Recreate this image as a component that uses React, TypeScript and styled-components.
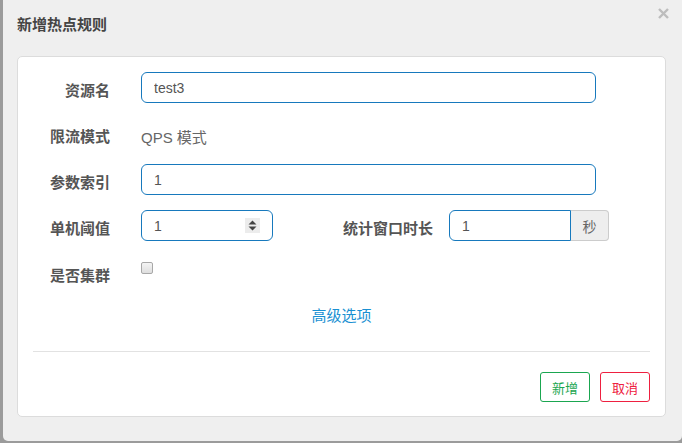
import styled, { createGlobalStyle } from 'styled-components';

const GlobalStyle = createGlobalStyle`
  html, body {
    margin: 0;
    padding: 0;
    background: #9b9b9b;
  }
  body {
    font-family: "Liberation Sans", "Noto Sans CJK SC", sans-serif;
  }
  * {
    box-sizing: border-box;
  }
`;

const Page = styled.div`
  display: flex;
  width: 682px;
  height: 443px;
  overflow: hidden;
`;

const Modal = styled.div`
  flex: 1;
  margin-left: 3px;
  height: 441px;
  background: #efefef;
  border-radius: 0 0 5px 5px;
  display: flex;
  flex-direction: column;
  padding: 0 16px 0 14px;
`;

const Header = styled.div`
  display: flex;
  justify-content: space-between;
  align-items: flex-start;
  height: 56px;
  padding-top: 15px;
`;

const Title = styled.h4`
  margin: 0;
  font-size: 15px;
  line-height: 20px;
  font-weight: bold;
  color: #444;
`;

const Close = styled.button`
  border: none;
  background: none;
  padding: 0;
  margin: -7px -3px 0 0;
  width: 11px;
  height: 11px;
  display: flex;
  cursor: pointer;
`;

const Panel = styled.div`
  background: #fff;
  border: 1px solid #dcdcdc;
  border-radius: 5px;
  height: 361px;
  display: flex;
  flex-direction: column;
  padding-top: 15px;
`;

const FormGroup = styled.div<{ $gap?: number }>`
  display: flex;
  align-items: flex-start;
  min-height: 31px;
  margin-bottom: ${(p) => (p.$gap ?? 15)}px;
`;

const Label = styled.label<{ $width?: number; $space?: number }>`
  width: ${(p) => p.$width ?? 92}px;
  margin-right: ${(p) => p.$space ?? 31}px;
  text-align: right;
  padding-top: 8px;
  line-height: 20px;
  font-size: 15px;
  font-weight: bold;
  color: #555;
  font-family: "Noto Sans CJK SC", sans-serif;
  flex: none;
`;

const inputBase = `
  height: 31px;
  border: 1px solid #1779bd;
  padding: 0 12px;
  font-size: 14px;
  color: #555;
  font-family: "Liberation Sans", "Noto Sans CJK SC", sans-serif;
  background: #fff;
  outline: none;
`;

const TextInput = styled.input<{ $width: number }>`
  ${inputBase}
  width: ${(p) => p.$width}px;
  border-radius: 6px;
`;

const StaticText = styled.p`
  margin: 0;
  padding-top: 10px;
  line-height: 20px;
  font-size: 15px;
  color: #666;
`;

const SpinBox = styled.div`
  ${inputBase}
  width: 132px;
  border-radius: 6px;
  display: flex;
  align-items: center;
`;

const BareInput = styled.input`
  flex: 1;
  min-width: 0;
  border: none;
  outline: none;
  padding: 0;
  font: inherit;
  color: inherit;
  background: transparent;
`;

const SpinButtons = styled.span`
  width: 15px;
  height: 15px;
  background: #ececec;
  display: flex;
  align-items: center;
  justify-content: center;
`;

const InputGroup = styled.div`
  display: flex;
  width: 160px;
`;

const GroupInput = styled.input`
  ${inputBase}
  width: 122px;
  border-radius: 6px 0 0 6px;
`;

const Addon = styled.span`
  flex: 1;
  height: 31px;
  background: #eee;
  border: 1px solid #ccc;
  border-left: none;
  border-radius: 0 4px 4px 0;
  display: flex;
  align-items: center;
  justify-content: center;
  font-size: 14px;
  color: #666;
  font-family: "Noto Sans CJK SC", sans-serif;
`;

const CheckBox = styled.span`
  display: block;
  width: 12px;
  height: 12px;
  margin-top: 5px;
  border: 1px solid #a8a8a8;
  border-radius: 2px;
  background: linear-gradient(#f4f4f4, #dedede);
`;

const AdvancedLink = styled.a`
  display: block;
  text-align: center;
  line-height: 24px;
  font-size: 15px;
  color: #1a90d2;
  font-family: "Noto Sans CJK SC", sans-serif;
  cursor: pointer;
`;

const Divider = styled.hr`
  border: none;
  border-top: 1px solid #e2e2e2;
  margin: 24px 15px 0;
`;

const Footer = styled.div`
  display: flex;
  justify-content: flex-end;
  gap: 10px;
  padding: 20px 15px 0 0;
`;

const OutlineButton = styled.button<{ $color: string }>`
  width: 50px;
  height: 30px;
  background: #fff;
  border: 1px solid ${(p) => p.$color};
  color: ${(p) => p.$color};
  border-radius: 3px;
  font-size: 13px;
  font-family: "Noto Sans CJK SC", sans-serif;
  padding: 0;
  cursor: pointer;
`;

function App() {
  return (
    <Page>
      <GlobalStyle />
      <Modal>
        <Header>
          <Title>新增热点规则</Title>
          <Close aria-label="close">
            <svg width="11" height="11" viewBox="0 0 11 11">
              <path d="M1 1L10 10M10 1L1 10" stroke="#bdbdbd" strokeWidth="2.4" />
            </svg>
          </Close>
        </Header>
        <Panel>
          <FormGroup>
            <Label>资源名</Label>
            <TextInput $width={455} defaultValue="test3" />
          </FormGroup>
          <FormGroup>
            <Label>限流模式</Label>
            <StaticText>QPS 模式</StaticText>
          </FormGroup>
          <FormGroup>
            <Label>参数索引</Label>
            <TextInput $width={455} defaultValue="1" />
          </FormGroup>
          <FormGroup $gap={16}>
            <Label>单机阈值</Label>
            <SpinBox>
              <BareInput defaultValue="1" />
              <SpinButtons>
                <svg width="9" height="11" viewBox="0 0 9 11">
                  <path d="M4.5 0.5L8.5 4.5H0.5Z M0.5 6.5H8.5L4.5 10.5Z" fill="#444" />
                </svg>
              </SpinButtons>
            </SpinBox>
            <Label $width={160} $space={16}>统计窗口时长</Label>
            <InputGroup>
              <GroupInput defaultValue="1" />
              <Addon>秒</Addon>
            </InputGroup>
          </FormGroup>
          <FormGroup>
            <Label>是否集群</Label>
            <CheckBox />
          </FormGroup>
          <AdvancedLink>高级选项</AdvancedLink>
          <Divider />
          <Footer>
            <OutlineButton $color="#1aa650">新增</OutlineButton>
            <OutlineButton $color="#ee2040">取消</OutlineButton>
          </Footer>
        </Panel>
      </Modal>
    </Page>
  );
}

export default App;
